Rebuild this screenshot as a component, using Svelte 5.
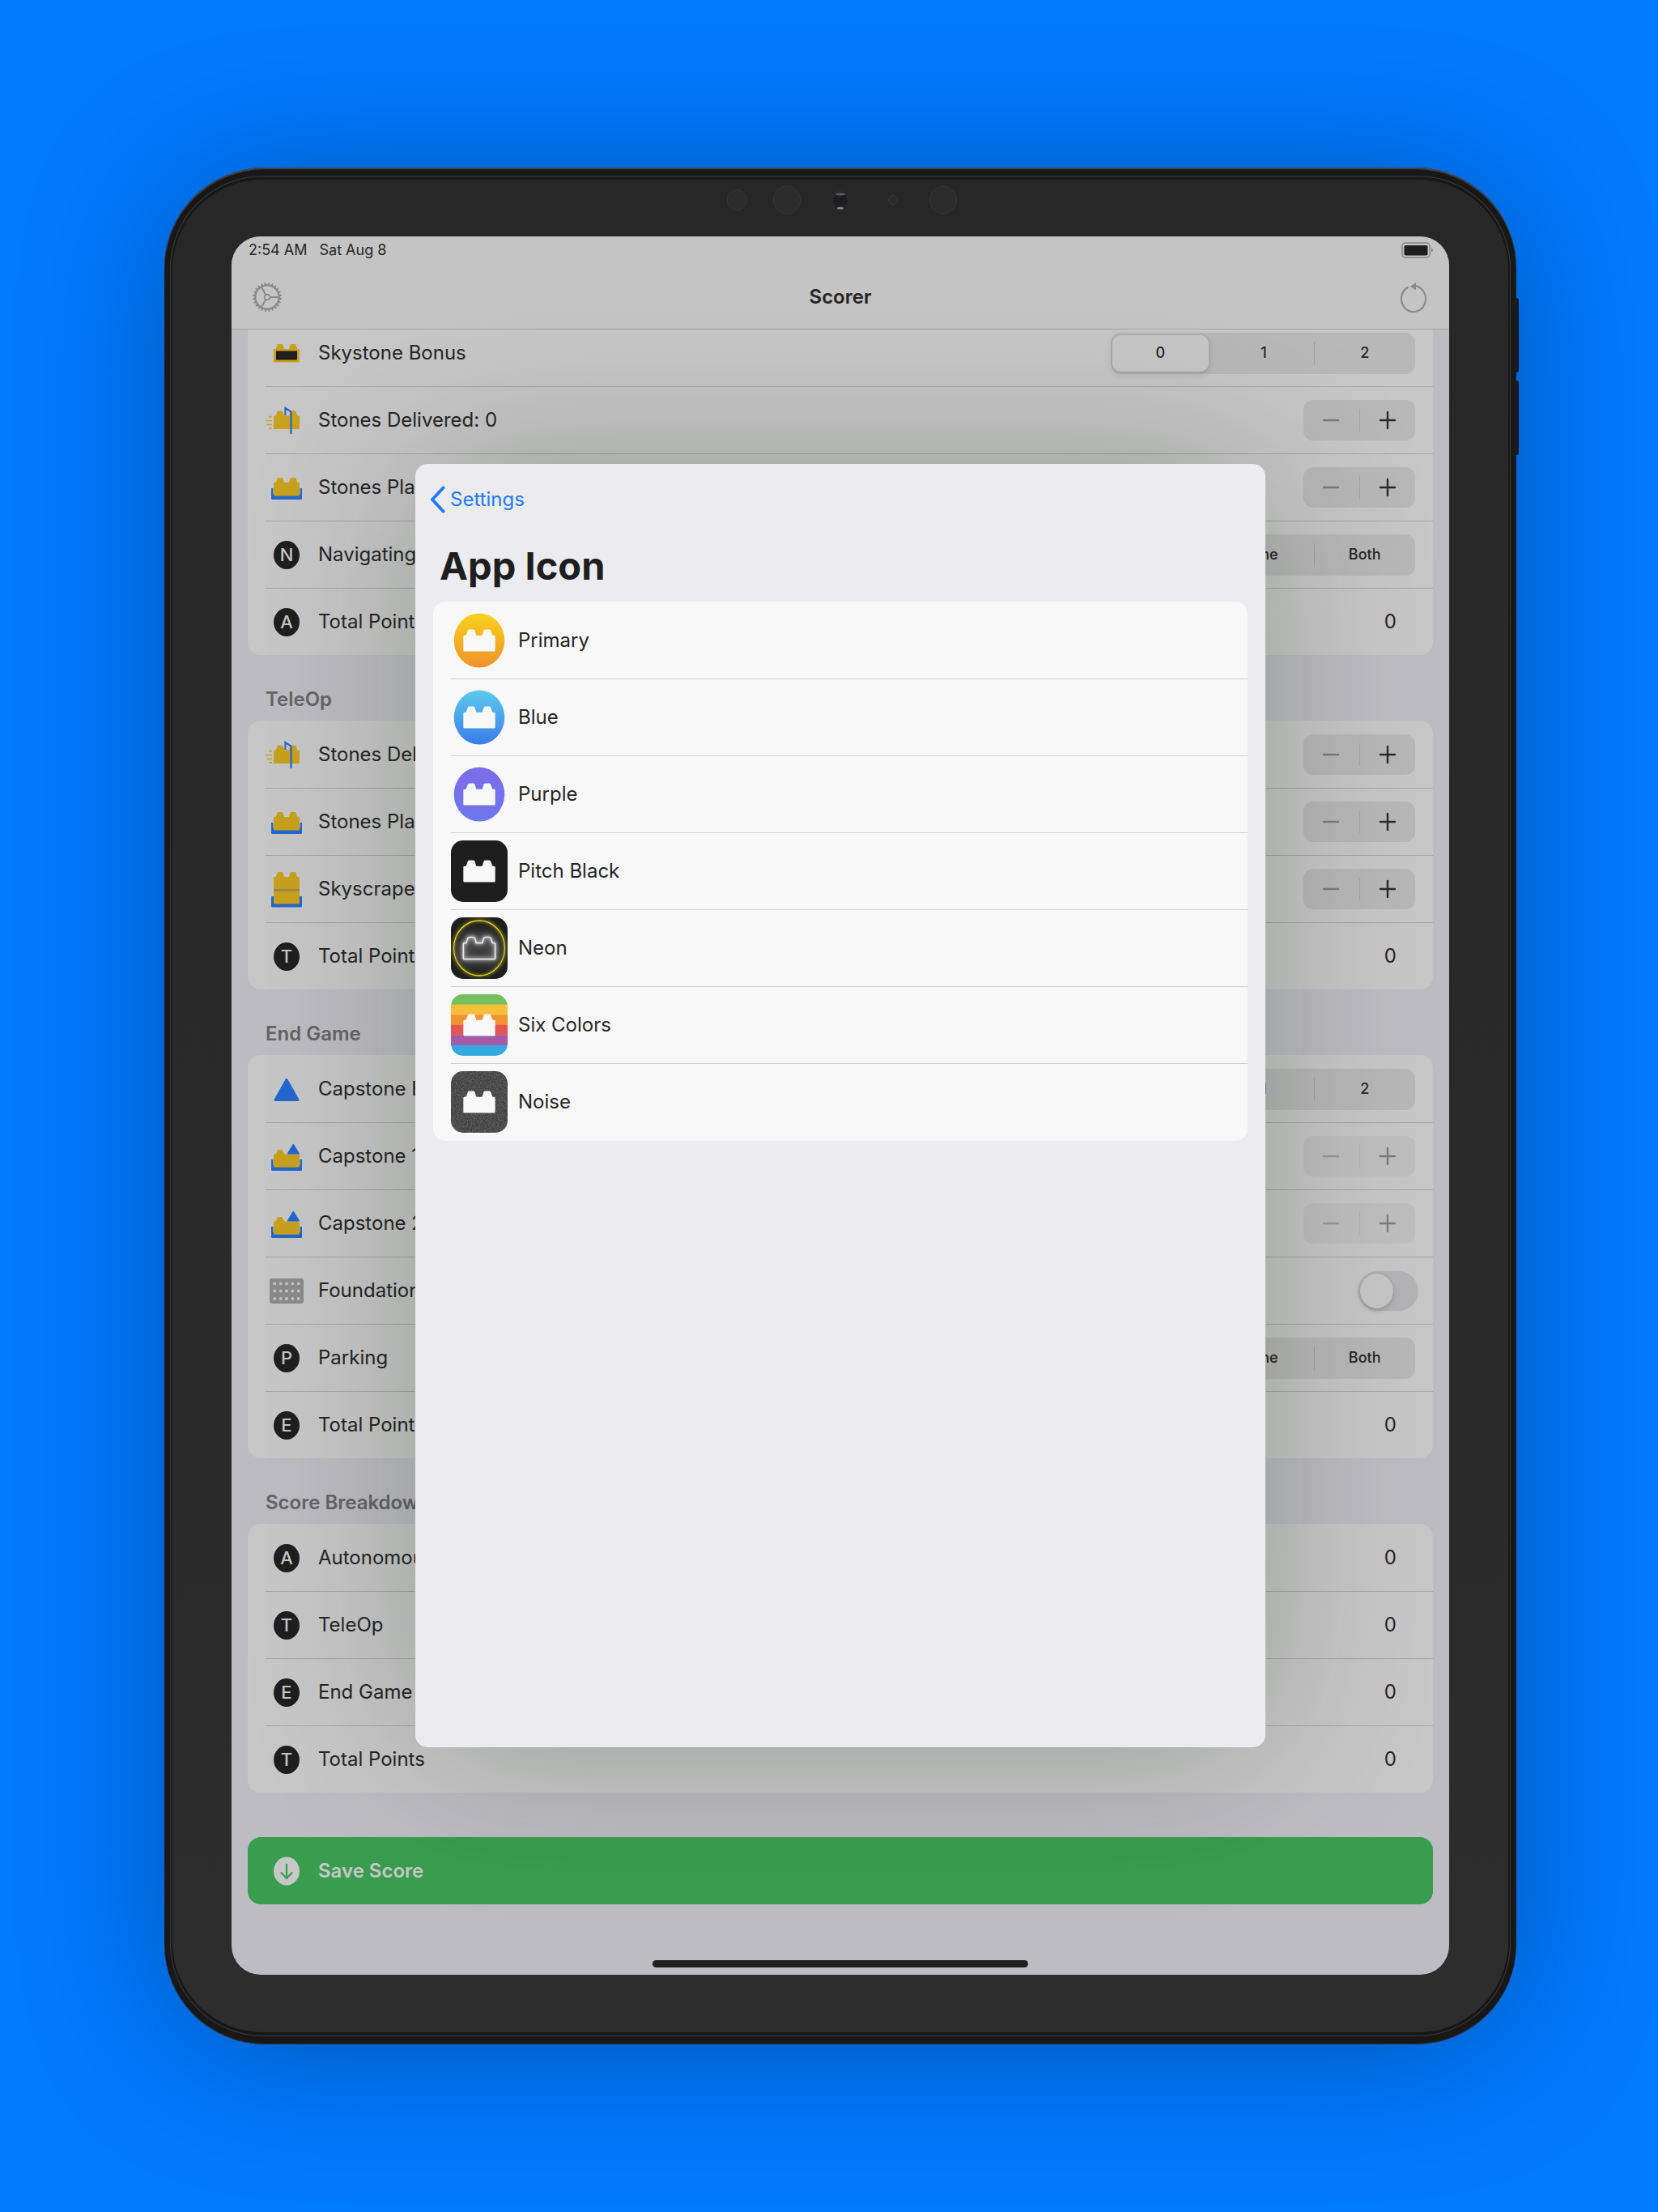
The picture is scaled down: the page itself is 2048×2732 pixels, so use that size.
<script>
  const brick =
    'M-16 7.2Q-16 6-15 6H-13.3L-11.5 1Q-11 0-10 0H-6Q-5 0-4.5 1L-3 6H3L4.5 1Q5 0 6 0H10Q11 0 11.5 1L13.3 6H15Q16 6 16 7.2V21.4Q16 22.6 15 22.6H-15Q-16 22.6-16 21.4Z';

  const sections = [
    {
      title: '',
      rows: [
        { icon: 'skystone', label: 'Skystone Bonus', segments: ['0', '1', '2'] },
        { icon: 'delivered', label: 'Stones Delivered: 0', stepper: true },
        { icon: 'placed', label: 'Stones Placed: 0', stepper: true },
        { letter: 'N', label: 'Navigating', segments: ['None', 'One', 'Both'] },
        { letter: 'A', label: 'Total Points', value: 0 }
      ]
    },
    {
      title: 'TeleOp',
      rows: [
        { icon: 'delivered', label: 'Stones Delivered: 0', stepper: true },
        { icon: 'placed', label: 'Stones Placed: 0', stepper: true },
        { icon: 'skyscraper', label: 'Skyscraper Height: 0', stepper: true },
        { letter: 'T', label: 'Total Points', value: 0 }
      ]
    },
    {
      title: 'End Game',
      rows: [
        { icon: 'triangle', label: 'Capstone Bonus', segments: ['0', '1', '2'] },
        { icon: 'capstone', label: 'Capstone 1 Height: 0', stepper: true, disabled: true },
        { icon: 'capstone', label: 'Capstone 2 Height: 0', stepper: true, disabled: true },
        { icon: 'foundation', label: 'Foundation Moved', toggle: true },
        { letter: 'P', label: 'Parking', segments: ['None', 'One', 'Both'] },
        { letter: 'E', label: 'Total Points', value: 0 }
      ]
    },
    {
      title: 'Score Breakdown',
      rows: [
        { letter: 'A', label: 'Autonomous', value: 0 },
        { letter: 'T', label: 'TeleOp', value: 0 },
        { letter: 'E', label: 'End Game', value: 0 },
        { letter: 'T', label: 'Total Points', value: 0 }
      ]
    }
  ];

  const appIcons = ['Primary', 'Blue', 'Purple', 'Pitch Black', 'Neon', 'Six Colors', 'Noise'];
  const stripes = ['#75bf5e', '#f7bf3b', '#f29331', '#e15650', '#a45aa6', '#35a8df'];
  const teeth = Array.from({ length: 24 }, (_, i) => i * 15 + 7);
</script>

<div class="page">
  <div class="device">
    <span class="side-key upper"></span>
    <span class="side-key lower"></span>
    <div class="glass">
      <svg class="sensors" viewBox="-2 0 300 40" aria-hidden="true">
        <g fill="#2c2c2c" stroke="#363636" stroke-width="1">
          <ellipse cx="20" cy="20" rx="12" ry="12.5" />
          <ellipse cx="82" cy="20" rx="16.5" ry="17" />
          <circle cx="213" cy="20" r="5.5" />
          <ellipse cx="275" cy="20" rx="16.5" ry="17" />
        </g>
        <circle cx="148" cy="19" r="11" fill="#2a2930" />
        <circle cx="148" cy="21" r="9" fill="#1d1d1f" />
        <ellipse cx="148" cy="13" rx="6" ry="1.5" fill="#606065" />
        <ellipse cx="148" cy="30" rx="4" ry="1.5" fill="#85858a" />
      </svg>

      <div class="screen">
        <header>
          <div class="status">
            <span>2:54 AM</span>
            <span>Sat Aug 8</span>
            <svg class="battery" viewBox="0 0 40 20" aria-hidden="true">
              <rect x="1" y="1" width="34" height="18" rx="4" fill="none" stroke="#858585" stroke-width="1.4" />
              <rect x="3.5" y="4" width="29" height="12.5" rx="1.8" fill="#1e1e1e" />
              <path d="M37 7.5q2 .6 2 2.5t-2 2.5z" fill="#858585" />
            </svg>
          </div>
          <nav>
            <button class="plain" aria-label="Settings">
              <svg width="38" height="40" viewBox="-19 -20 38 40" fill="none" stroke="#8a8a8a">
                <circle r="14.6" stroke-width="2.2" />
                {#each teeth as angle}
                  <path d="M15-1.6L18-.7V.7L15 1.6Z" fill="#8a8a8a" stroke="none" transform="rotate({angle})" />
                {/each}
                <circle r="3.4" stroke-width="1.8" />
                <path d="M3.5 0H14M-1.8-3L-7-12.6M-1.8 3L-7 12.6" stroke-width="2" />
              </svg>
            </button>
            <h1>Scorer</h1>
            <button class="plain" aria-label="Reset">
              <svg width="38" height="40" viewBox="-19 -22 38 40" fill="none" stroke="#8a8a8a" stroke-width="2.2" stroke-linecap="round">
                <path d="M2-15.8A15 16 0 1 1-7.5-13.8" />
                <path d="M-4-15.3L3-20V-10.4Z" fill="#8a8a8a" stroke="none" />
              </svg>
            </button>
          </nav>
        </header>

        <main>
          {#each sections as section, s}
            <section>
              {#if section.title}<h2>{section.title}</h2>{/if}
              <div class="card">
                {#each section.rows as row, r}
                  <div class="row">
                    <div class="slot">
                      {#if row.letter}
                        <span class="letter">{row.letter}</span>
                      {:else}
                        <svg width="56" height="56" viewBox="-28 -28 56 56" aria-hidden="true">
                          {#if row.icon === 'skystone'}
                            <path d={brick} fill="#c8a11d" transform="translate(0 -11)" />
                            <rect x="-13" y="-2.5" width="26" height="11" fill="#1e1e1e" />
                          {:else if row.icon === 'delivered'}
                            <path d={brick} fill="#c8a11d" transform="translate(0 -11.5)" />
                            <path d="M-22-4.3h4M-26 .5h8M-24.5 5.3h6.5M-22 9.8h4" stroke="#c8a339" stroke-width="1.7" />
                            <path d="M-1.5-6V-15L5.5-10.5V17" fill="none" stroke="#2367cf" stroke-width="2.2" />
                            <path d="M-.5-6.5V-12L4.5-9V-8.5H1Q0-7.5-.5-6.5Z" fill="#c1c1c0" />
                          {:else if row.icon === 'placed'}
                            <path d="M-19 1H19V13.5Q19 15 17.5 15H-17.5Q-19 15-19 13.5Z" fill="#2367cf" />
                            <rect x="-16.6" y="0" width="33.2" height="8" fill="#c5c5c4" />
                            <path d={brick} fill="#c8a11d" transform="translate(0 -12)" />
                          {:else if row.icon === 'skyscraper'}
                            <path d="M-19 9H19V21Q19 22.5 17.5 22.5H-17.5Q-19 22.5-19 21Z" fill="#2367cf" />
                            <rect x="-16" y="1" width="32" height="17.5" rx="1" fill="#c8a11d" />
                            <path d={brick} fill="#c8a11d" transform="translate(0 -21)" />
                            <path d="M-16 1.3H16" stroke="#8a8266" stroke-width="2" />
                          {:else if row.icon === 'triangle'}
                            <path d="M-14 13.5L0-11.5L14 13.5Z" fill="#2367cf" stroke="#2367cf" stroke-width="3" stroke-linejoin="round" />
                          {:else if row.icon === 'capstone'}
                            <path d="M-19 4H19V16.5Q19 18 17.5 18H-17.5Q-19 18-19 16.5Z" fill="#2367cf" />
                            <rect x="-16.6" y="0" width="33.2" height="11" fill="#c5c5c4" />
                            <path d="M-16-1.8Q-16-2.6-15-2.6H-13.3L-11.5-7Q-11-8-10-8H-6.5Q-5.5-8-5-7L-3-2.6H15Q16-2.6 16-1.8V12.5Q16 13.7 15 13.7H-15Q-16 13.7-16 12.5Z" fill="#c8a11d" />
                            <path d="M1.6-3.3L8.3-14.5L15.2-3.3Z" fill="#2367cf" stroke="#2367cf" stroke-width="1.4" stroke-linejoin="round" />
                          {:else}
                            <rect x="-21" y="-15" width="42" height="31" rx="3" fill="#8b8b8c" />
                            {#each [-8.5, 0.5, 10] as y}
                              {#each [-14.8, -7.4, 0, 7.4, 14.8] as x}
                                <rect x={x - 1.7} y={y - 1.7} width="3.4" height="3.4" rx=".8" fill="#c6c6c6" />
                              {/each}
                            {/each}
                          {/if}
                        </svg>
                      {/if}
                    </div>
                    <span class="label" id="label-{s}-{r}">{row.label}</span>
                    {#if row.segments}
                      <div class="segmented" role="radiogroup" aria-labelledby="label-{s}-{r}">
                        {#each row.segments as option, i}
                          <label>
                            <input type="radio" name="segment-{s}-{r}" value={option} checked={i === 0} />
                            <span>{option}</span>
                          </label>
                        {/each}
                      </div>
                    {:else if row.stepper}
                      <div class="stepper" class:off={row.disabled}>
                        <button aria-label="Decrease {row.label}" disabled>
                          <svg width="22" height="24" viewBox="0 0 22 24"><path d="M2 12H20" /></svg>
                        </button>
                        <button aria-label="Increase {row.label}" disabled={row.disabled}>
                          <svg width="22" height="24" viewBox="0 0 22 24"><path d="M2 12H20M11 2V22" /></svg>
                        </button>
                      </div>
                    {:else if row.toggle}
                      <input class="toggle" type="checkbox" role="switch" aria-labelledby="label-{s}-{r}" />
                    {:else}
                      <span class="value">{row.value}</span>
                    {/if}
                  </div>
                {/each}
              </div>
            </section>
          {/each}

          <button class="save">
            <span class="slot">
              <svg width="32" height="36" viewBox="-16 -18 32 36" aria-hidden="true">
                <ellipse rx="16" ry="17.5" fill="#c7c7c7" />
                <path d="M0-8.5V8.5M-6.5 2L0 9L6.5 2" fill="none" stroke="#389e4e" stroke-width="2.2" stroke-linecap="round" stroke-linejoin="round" />
              </svg>
            </span>
            Save Score
          </button>
        </main>
        <div class="home-bar"></div>

        <div class="overlay">
          <div class="sheet" role="dialog" aria-modal="true" aria-labelledby="sheet-title">
            <a class="back" href="#settings">
              <svg width="20" height="34" viewBox="0 0 20 34" fill="none" stroke="#207aff" stroke-width="4" stroke-linecap="round" stroke-linejoin="round">
                <path d="M16.5 2.5L3 17L16.5 31.5" />
              </svg>
              Settings
            </a>
            <h2 id="sheet-title">App Icon</h2>
            <div class="choices">
              {#each appIcons as name}
                <button class="choice">
                  <svg width="70" height="76" viewBox="0 0 70 76" aria-hidden="true">
                    <defs>
                      <linearGradient id="gold" x2="0" y2="1"><stop stop-color="#f8d11b" /><stop offset="1" stop-color="#f1922b" /></linearGradient>
                      <linearGradient id="sky" x2="0" y2="1"><stop stop-color="#5bcbed" /><stop offset="1" stop-color="#3a7de8" /></linearGradient>
                      <linearGradient id="violet" x2="0" y2="1"><stop stop-color="#7d6ce9" /><stop offset="1" stop-color="#6d76ec" /></linearGradient>
                      <clipPath id="tile"><rect width="70" height="76" rx="15" /></clipPath>
                      <filter id="glow" x="-30%" y="-30%" width="160%" height="160%"><feGaussianBlur stdDeviation="2" /></filter>
                      <filter id="haze" x="-50%" y="-50%" width="200%" height="200%"><feGaussianBlur stdDeviation="6" /></filter>
                      <filter id="grain" color-interpolation-filters="sRGB">
                        <feTurbulence type="fractalNoise" baseFrequency=".6" numOctaves="2" />
                        <feColorMatrix values=".3 0 0 0 .15 .3 0 0 0 .15 .3 0 0 0 .15 0 0 0 0 1" />
                      </filter>
                    </defs>
                    {#if name === 'Primary' || name === 'Blue' || name === 'Purple'}
                      <ellipse cx="35" cy="38" rx="31.3" ry="33.6" fill="url(#{name === 'Primary' ? 'gold' : name === 'Blue' ? 'sky' : 'violet'})" />
                    {:else}
                      <g clip-path="url(#tile)">
                        {#if name === 'Six Colors'}
                          {#each stripes as color, i}
                            <rect y={i * 12.6} width="70" height="13" fill={color} />
                          {/each}
                        {:else if name === 'Noise'}
                          <rect width="70" height="76" filter="url(#grain)" />
                        {:else}
                          <rect width="70" height="76" fill="#1e1e1e" />
                        {/if}
                      </g>
                    {/if}
                    {#if name === 'Neon'}
                      <ellipse cx="35" cy="38" rx="31.5" ry="34" fill="none" stroke="#cdbf16" stroke-width="3" opacity=".6" filter="url(#glow)" />
                      <ellipse cx="35" cy="38" rx="31.5" ry="34" fill="none" stroke="#e2d41c" stroke-width="1.3" />
                      <g transform="translate(35 24.5) scale(1.23 1.2)" fill="none" stroke-linejoin="round">
                        <path d={brick} stroke="#8a8a8a" stroke-width="5" filter="url(#haze)" />
                        <path d={brick} stroke="#ffffff" stroke-width="2.5" opacity=".7" filter="url(#glow)" />
                        <path d={brick} stroke="#e9e9e9" stroke-width="1.4" />
                      </g>
                    {:else}
                      <path d={brick} fill="#f8f8f8" transform="translate(35 24.5) scale(1.23 1.2)" />
                    {/if}
                  </svg>
                  <span>{name}</span>
                </button>
              {/each}
            </div>
          </div>
        </div>
      </div>
    </div>
  </div>
</div>

<style>
  :global(body) {
    background: #007aff;
  }
  .page {
    box-sizing: border-box;
    padding: 207px 175px 207px 203px;
    font-family: Inter, Roboto, sans-serif;
    font-size: 24px;
    line-height: 30px;
    color: #252525;
  }
  button {
    font: inherit;
    color: inherit;
    border: 0;
    padding: 0;
    background: none;
    text-align: left;
  }
  h1, h2 {
    margin: 0;
    font-weight: 600;
  }
  svg {
    display: block;
  }
  .device {
    position: relative;
    padding: 15px 10px;
    border-radius: 124px;
    background: #181818;
    box-shadow:
      inset 0 2px 1px #484848,
      inset 0 -1px 1px #333,
      0 10px 180px -10px rgba(0, 0, 0, 0.34);
  }
  .side-key {
    position: absolute;
    left: 100%;
    width: 3px;
    height: 92px;
    border-radius: 0 3px 3px 0;
    background: #16181c;
  }
  .side-key.upper {
    top: 161px;
  }
  .side-key.lower {
    top: 263px;
  }
  .glass {
    position: relative;
    padding: 70px 73px 71px 73px;
    border-radius: 112px;
    background: linear-gradient(#272727, #2d2d2d);
    box-shadow:
      0 -2px 0 2px #181818,
      0 2px 0 2px #181818,
      0 -2px 0 3px #3c3c3c,
      0 2px 0 3px #3c3c3c;
  }
  .sensors {
    position: absolute;
    top: 5px;
    left: 0;
    right: 0;
    margin: 0 auto;
    width: 300px;
    height: 40px;
  }
  .screen {
    position: relative;
    overflow: hidden;
    border-radius: 36px;
    background: #bdbcc2;
  }
  header {
    position: relative;
    z-index: 1;
    box-sizing: border-box;
    height: 115px;
    background: #c4c4c4;
    border-bottom: 1px solid #a5a5a7;
  }
  .status {
    display: flex;
    align-items: center;
    gap: 15px;
    height: 34px;
    padding: 0 19px 0 21px;
    font-size: 18px;
  }
  .battery {
    width: 40px;
    height: 20px;
    margin-left: auto;
  }
  nav {
    display: flex;
    align-items: center;
    justify-content: space-between;
    padding: 21px 25px 0;
  }
  main {
    padding: 0 20px;
    margin-top: -13px;
  }
  nav h1,
  section h2 {
    font-size: 24px;
  }
  section h2 {
    box-sizing: border-box;
    height: 81px;
    padding: 40px 0 0 22px;
    color: #646466;
  }
  .card {
    padding-left: 22px;
    border-radius: 16px;
    background: #c7c7c7;
  }
  .row {
    box-sizing: border-box;
    height: 83px;
    display: flex;
    align-items: center;
    padding-right: 22px;
    border-top: 1px solid #a6a6a6;
  }
  .row:first-child {
    border-top-color: transparent;
  }
  .slot {
    width: 52px;
    margin-right: 13px;
    display: flex;
    justify-content: center;
    flex: none;
  }
  .slot svg {
    flex: none;
  }
  .letter {
    width: 32px;
    height: 35px;
    border-radius: 50%;
    background: #1f1f1f;
    color: #c7c7c7;
    font-size: 22px;
    font-weight: 500;
    line-height: 35px;
    text-align: center;
  }
  .label {
    flex: 1;
  }
  .value {
    padding-right: 23px;
  }
  .segmented {
    box-sizing: border-box;
    display: flex;
    width: 376px;
    height: 51px;
    padding: 3px 0 3px 2px;
    border-radius: 12px;
    background: #b8b8b8;
    font-size: 18px;
    font-weight: 500;
  }
  .segmented label {
    position: relative;
    flex: 1;
    display: flex;
  }
  .segmented label:last-child::before {
    content: '';
    position: absolute;
    left: 0;
    top: 8px;
    bottom: 8px;
    width: 1px;
    background: #a3a3a3;
  }
  .segmented input {
    position: absolute;
    inset: 0;
    margin: 0;
    opacity: 0;
  }
  .segmented span {
    flex: 1;
    display: flex;
    align-items: center;
    justify-content: center;
    margin-right: 6px;
    border-radius: 10px;
  }
  .segmented label + label span {
    margin-right: 0;
  }
  .segmented input:checked + span {
    background: #c7c7c7;
    box-shadow: 0 3px 8px rgba(0, 0, 0, 0.12), 0 0 1px 1px rgba(0, 0, 0, 0.05);
  }
  .stepper {
    display: flex;
    align-items: center;
    width: 138px;
    height: 50px;
    border-radius: 12px;
    background: #b8b8b8;
  }
  .stepper button {
    flex: 1;
    display: flex;
    align-items: center;
    justify-content: center;
    height: 28px;
  }
  .stepper button + button {
    border-left: 1px solid #a6a6a6;
  }
  .stepper path {
    stroke: #2b2b2b;
    stroke-width: 2.4;
    stroke-linecap: round;
  }
  .stepper button:disabled path {
    stroke: #7b7b7b;
  }
  .stepper.off {
    background: #bfbfbf;
  }
  .stepper.off button + button {
    border-left-color: #b3b3b3;
  }
  .stepper.off button:disabled path {
    stroke: #999;
  }
  .stepper.off button + button:disabled path {
    stroke: #7d7d7d;
  }
  .toggle {
    appearance: none;
    box-sizing: border-box;
    width: 75px;
    height: 49px;
    margin: 0 -4px 0 0;
    padding: 3px;
    border-radius: 25px;
    background: #b4b4b6;
  }
  .toggle::before {
    content: '';
    display: block;
    width: 41px;
    height: 43px;
    border-radius: 50%;
    background: #c7c7c7;
    box-shadow: 0 3px 6px rgba(0, 0, 0, 0.15), 0 0 1px 1px rgba(0, 0, 0, 0.04);
  }
  .toggle:checked::before {
    margin-left: auto;
  }
  .save {
    display: flex;
    align-items: center;
    width: 100%;
    height: 83px;
    margin-top: 55px;
    padding-left: 22px;
    border-radius: 16px;
    background: #389e4e;
    color: #c7c7c7;
    font-weight: 600;
  }
  .home-bar {
    width: 464px;
    height: 9px;
    margin: 69px auto 9px;
    border-radius: 5px;
    background: #1f1f1f;
  }
  .overlay {
    position: absolute;
    inset: 0;
    z-index: 2;
    display: flex;
    padding: 281px 227px;
  }
  .sheet {
    flex: 1;
    border-radius: 15px;
    background: #ebebf0;
    box-shadow: 0 0 210px rgba(10, 24, 10, 0.24);
    padding: 0 22px;
  }
  .back {
    display: flex;
    align-items: center;
    width: max-content;
    gap: 5px;
    height: 88px;
    margin-left: -4px;
    color: #207aff;
    text-decoration: none;
  }
  .sheet h2 {
    padding: 0 8px;
    height: 82px;
    font-size: 47px;
    font-weight: 700;
    line-height: 76px;
    color: #1e1e1e;
  }
  .choices {
    padding: 0 0 1px 22px;
    border-radius: 15px;
    background: #f8f8f8;
  }
  .choice {
    box-sizing: border-box;
    display: flex;
    align-items: center;
    gap: 13px;
    width: 100%;
    height: 95px;
    border-top: 1px solid #d0d0d0;
  }
  .choice:first-child {
    border-top-color: transparent;
  }
</style>
